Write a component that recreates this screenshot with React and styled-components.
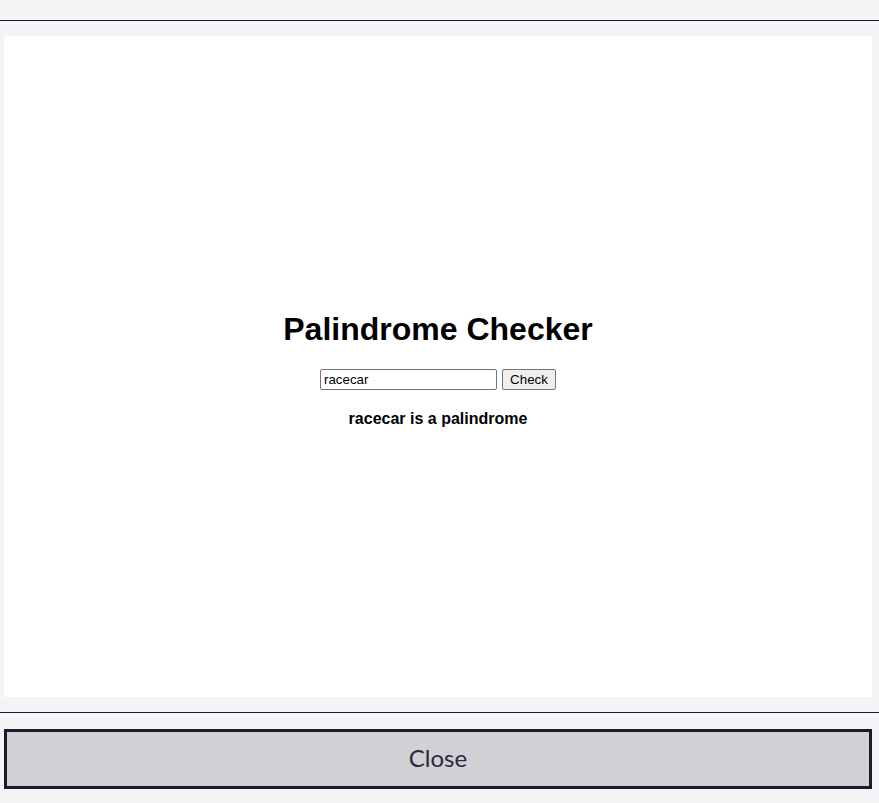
import React, { useState } from "react";
import styled, { createGlobalStyle } from "styled-components";

const Global = createGlobalStyle`
  html, body { margin: 0; padding: 0; background: #f3f4f6; }
  body { font-family: "Liberation Sans", Arial, sans-serif; }
`;

const Page = styled.div`
  height: 803px;
  display: flex;
  flex-direction: column;
  background: #f3f4f6;
`;

const TopBar = styled.div`
  height: 20px;
  border-bottom: 1px solid #1b1a33;
  flex: none;
`;

const Main = styled.div`
  padding: 15px 7px 15px 4px;
  flex: none;
`;

const Panel = styled.div`
  background: #ffffff;
  height: 661px;
  display: flex;
  flex-direction: column;
  align-items: center;
  justify-content: center;
  box-sizing: border-box;
`;

const Content = styled.div`
  display: flex;
  flex-direction: column;
  align-items: center;
  margin-top: 6px;
`;

const Title = styled.h1`
  margin: 0;
  font-family: "Liberation Sans", Arial, sans-serif;
  font-size: 32px;
  line-height: 37px;
  font-weight: 700;
  color: #000;
`;

const Row = styled.div`
  display: flex;
  gap: 5px;
  margin-top: 21px;
  align-items: center;
`;

const Input = styled.input`
  width: 177px;
  height: 21px;
  box-sizing: border-box;
  border: 1px solid #767676;
  border-radius: 2px;
  padding: 1px 3px;
  font-family: "Liberation Sans", Arial, sans-serif;
  font-size: 13.33px;
  color: #000;
  background: #fff;
  outline: none;
`;

const CheckButton = styled.button`
  width: 54px;
  height: 21px;
  box-sizing: border-box;
  border: 1px solid #767676;
  border-radius: 2px;
  background: #efefef;
  font-family: "Liberation Sans", Arial, sans-serif;
  font-size: 13.33px;
  color: #000;
  padding: 0;
`;

const Result = styled.p`
  margin: 20px 0 0;
  font-family: "Liberation Sans", Arial, sans-serif;
  font-size: 16px;
  line-height: 18px;
  font-weight: 700;
  color: #000;
`;

const Footer = styled.div`
  border-top: 1px solid #1b1a33;
  padding: 16px 7px 14px 4px;
  flex: none;
`;

const CloseButton = styled.button`
  display: block;
  width: 100%;
  height: 60px;
  box-sizing: border-box;
  border: 3px solid #1c1b2e;
  background: #d1d0d5;
  font-family: Lato, "Open Sans", sans-serif;
  font-size: 24px;
  line-height: 28px;
  color: #2a2a3a;
  padding: 0 0 2px;
  cursor: pointer;
`;

export default function App() {
  const [text, setText] = useState("racecar");
  return (
    <Page>
      <Global />
      <TopBar />
      <Main>
        <Panel>
          <Content>
            <Title>Palindrome Checker</Title>
            <Row>
              <Input value={text} onChange={(e) => setText(e.target.value)} />
              <CheckButton>Check</CheckButton>
            </Row>
            <Result>racecar is a palindrome</Result>
          </Content>
        </Panel>
      </Main>
      <Footer>
        <CloseButton>Close</CloseButton>
      </Footer>
    </Page>
  );
}
